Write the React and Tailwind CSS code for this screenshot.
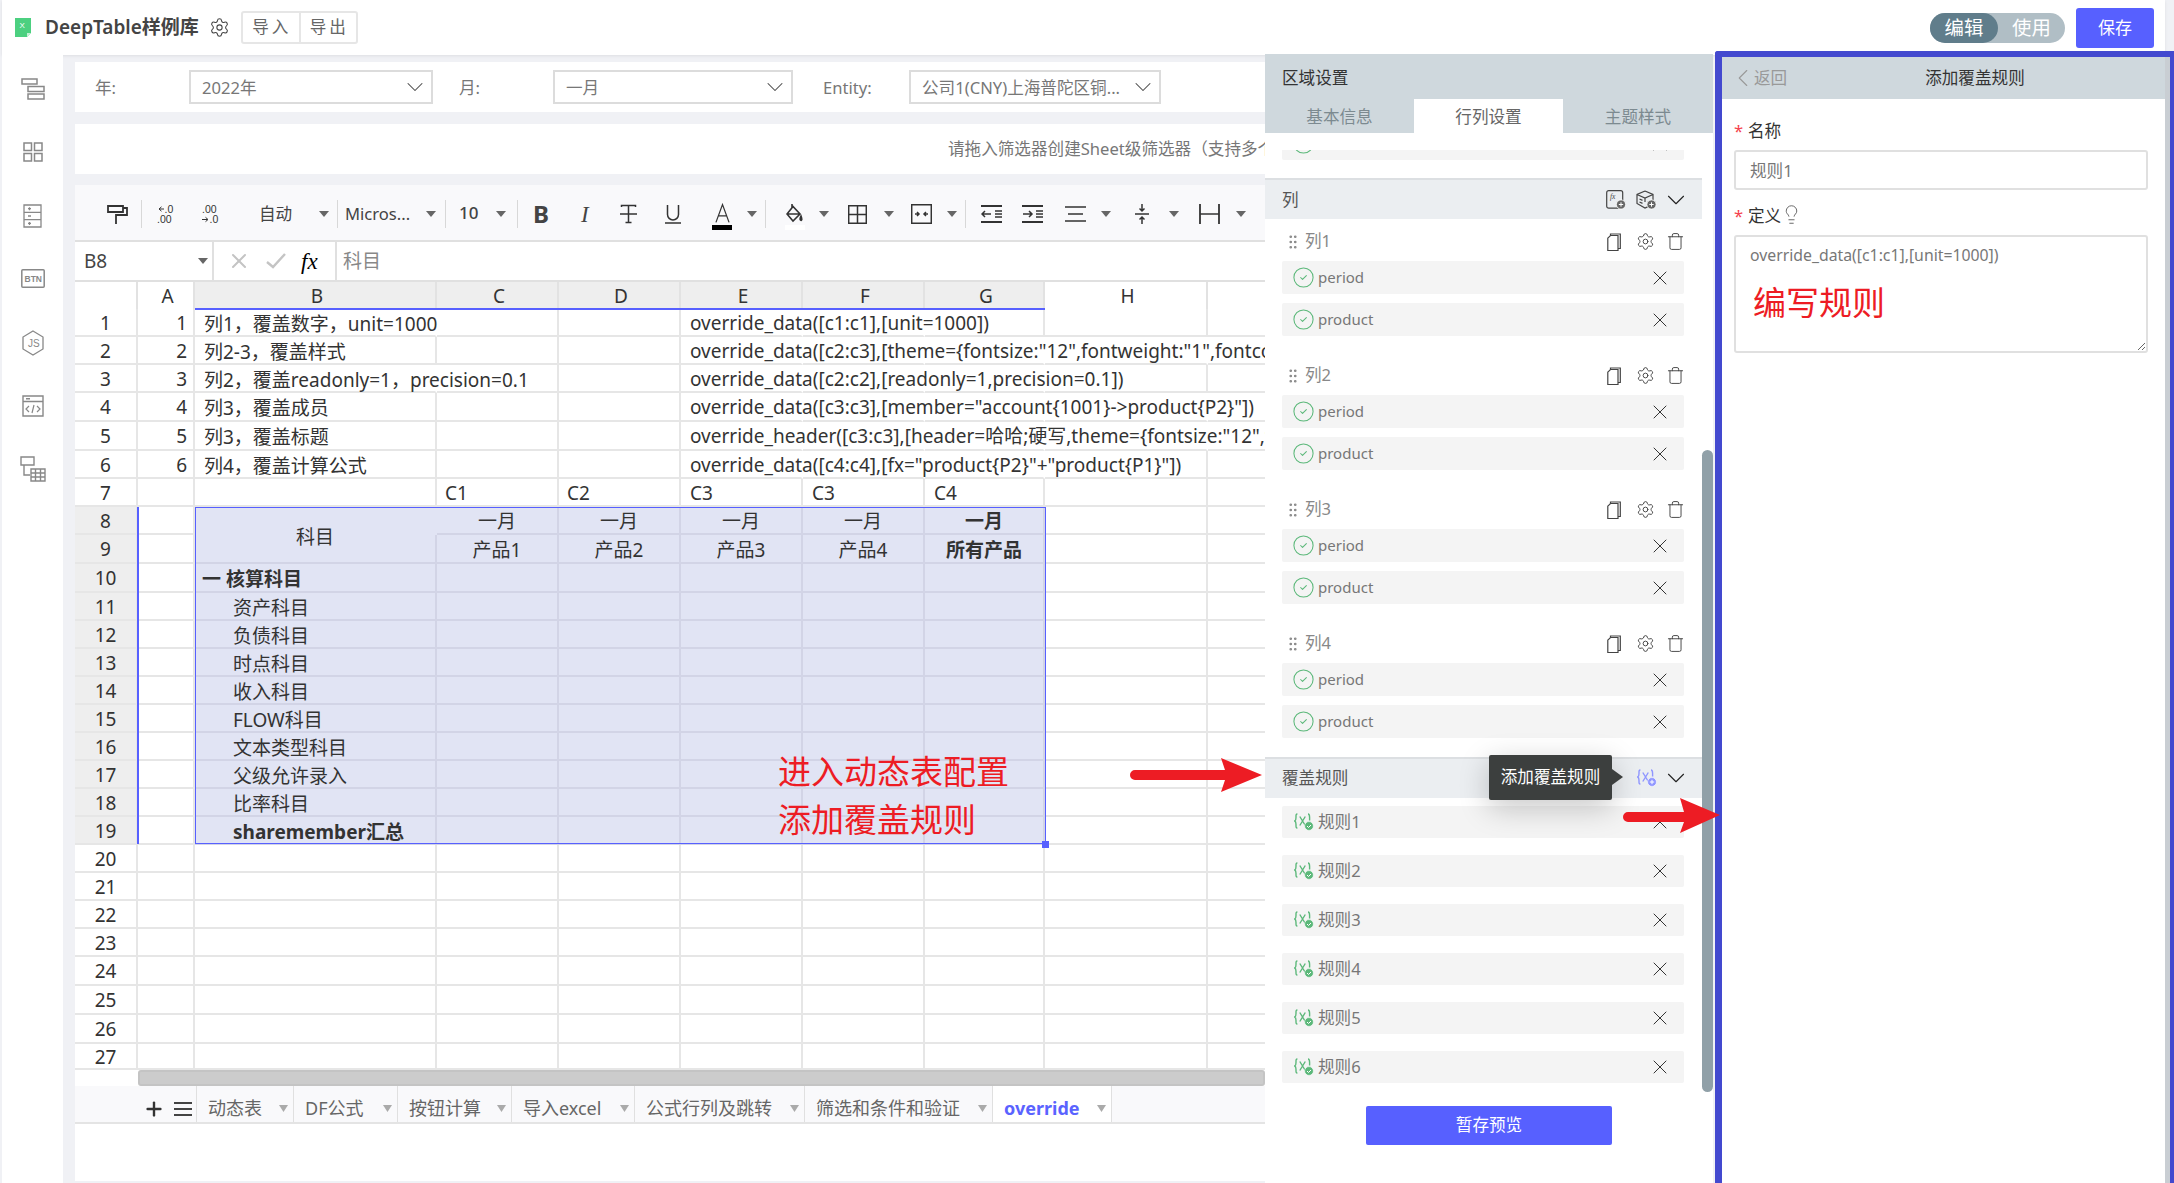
import React from 'react';
import { Settings, ChevronDown, ChevronLeft, CircleCheck, X, GripVertical, Trash, Lightbulb, Plus } from 'lucide-react';

const Caret = ({ className = '' }) => (
    <svg viewBox="0 0 10 6" className={`h-[6px] w-[10px] shrink-0 ${className}`}>
        <path d="M0 0h10L5 6z" fill="#666" />
    </svg>
);

const Sep = ({ className = '' }) => <div className={`h-[28px] w-px shrink-0 bg-[#d8d8d8] ${className}`} />;

// small drawings for the toolbar
const Ico = ({ className = '', vb = '0 0 20 20', children }) => (
    <svg viewBox={vb} fill="none" stroke="#333" strokeWidth="1.5" className={`shrink-0 ${className}`}>
        {children}
    </svg>
);

const FxDoc = () => (
    <svg viewBox="0 0 20 20" fill="none" className="h-[20px] w-[20px] shrink-0">
        <rect x="0.7" y="0.7" width="16" height="17.5" rx="2" stroke="#444" strokeWidth="1.2" />
        <text x="4" y="9" fontSize="7.5" fontStyle="italic" fill="#444" fontFamily="Liberation Serif">fx</text>
        <circle cx="15" cy="14.5" r="4.6" fill="#666" stroke="#fff" strokeWidth="0.8" />
        <path d="M15 12.3v4.4M12.8 14.5h4.4" stroke="#fff" strokeWidth="1" />
    </svg>
);

const CubePlus = () => (
    <svg viewBox="0 0 21 20" fill="none" stroke="#444" strokeWidth="1.2" className="h-[20px] w-[21px] shrink-0">
        <path d="M9 1l8 3.5v6M9 1L1 4.5v9L9 18l3-1.4M1 4.5L9 8l8-3.5M9 8v4M3.5 9l3 1.4M3.5 12l3 1.4" />
        <circle cx="15.5" cy="14.5" r="4.6" fill="#666" stroke="#fff" strokeWidth="0.8" />
        <path d="M15.5 12.3v4.4M13.3 14.5h4.4" stroke="#fff" strokeWidth="1" />
    </svg>
);

const CopyDoc = () => (
    <svg viewBox="0 0 14 18" fill="none" stroke="#444" strokeWidth="1.2" className="h-[18px] w-[14px] shrink-0">
        <path d="M3.5 2.5V1h9.8v14.5h-2.3" />
        <path d="M.8 5.2L3.5 2.5h7.5v15H.8z" />
    </svg>
);

const RuleIcon = ({ color = '#5cb87a', add = false }) => (
    <svg viewBox="0 0 20 18" fill="none" stroke={color} strokeWidth="1.4" className="h-[18px] w-[20px] shrink-0">
        <path d="M3.4 1C1.8 1 2 2.5 2 4.5S1.9 7.5.8 8c1.1.5 1.2 1.5 1.2 3.5S1.8 15 3.4 15" />
        <path d="M5.8 3.5l5.5 9M11.3 3.5L5.8 12.5" />
        <path d="M14 1c1.6 0 1.6 1.5 1.6 3.5v3" />
        <circle cx="15" cy="13" r="4.4" fill={color} stroke="#fff" strokeWidth="0.6" />
        {add ? (
            <path d="M15 10.8v4.4M12.8 13h4.4" stroke="#fff" strokeWidth="1" />
        ) : (
            <path d="M13 13l1.5 1.5L17 12" stroke="#fff" strokeWidth="1" />
        )}
    </svg>
);

const widths = [
    'w-[63px]', 'w-[57px]', 'w-[242px]', 'w-[122px]', 'w-[122px]',
    'w-[122px]', 'w-[122px]', 'w-[120px]', 'w-[163px]', 'w-[60px]',
];

const colNames = ['', 'A', 'B', 'C', 'D', 'E', 'F', 'G', 'H', ''];

const textRows = [
    { h: 'h-[28px]', a: '1', b: '列1，覆盖数字，unit=1000', e: 'override_data([c1:c1],[unit=1000])', open: [2, 5, 6] },
    { h: 'h-[28px]', a: '2', b: '列2-3，覆盖样式', e: 'override_data([c2:c3],[theme={fontsize:"12",fontweight:"1",fontcolor:"#000"}])', open: [5, 6, 7, 8] },
    { h: 'h-[28px]', a: '3', b: '列2，覆盖readonly=1，precision=0.1', e: 'override_data([c2:c2],[readonly=1,precision=0.1])', open: [2, 5, 6, 7] },
    { h: 'h-[29px]', a: '4', b: '列3，覆盖成员', e: 'override_data([c3:c3],[member="account{1001}->product{P2}"])', open: [5, 6, 7, 8] },
    { h: 'h-[29px]', a: '5', b: '列3，覆盖标题', e: 'override_header([c3:c3],[header=哈哈;硬写,theme={fontsize:"12",fontweight:"1"}])', open: [5, 6, 7, 8] },
    { h: 'h-[28px]', a: '6', b: '列4，覆盖计算公式', e: 'override_data([c4:c4],[fx="product{P2}"+"product{P1}"])', open: [5, 6, 7] },
];

const subjects = [
    { n: 10, h: 'h-[29px]', t: '一 核算科目', strong: true },
    { n: 11, h: 'h-[28px]', t: '资产科目', indent: true },
    { n: 12, h: 'h-[28px]', t: '负债科目', indent: true },
    { n: 13, h: 'h-[28px]', t: '时点科目', indent: true },
    { n: 14, h: 'h-[28px]', t: '收入科目', indent: true },
    { n: 15, h: 'h-[28px]', t: 'FLOW科目', indent: true },
    { n: 16, h: 'h-[28px]', t: '文本类型科目', indent: true },
    { n: 17, h: 'h-[28px]', t: '父级允许录入', indent: true },
    { n: 18, h: 'h-[28px]', t: '比率科目', indent: true },
    { n: 19, h: 'h-[28px]', t: 'sharemember汇总', indent: true, strong: true },
];

const blanks = [
    { n: 20, h: 'h-[28px]' }, { n: 21, h: 'h-[28px]' }, { n: 22, h: 'h-[28px]' }, { n: 23, h: 'h-[28px]' },
    { n: 24, h: 'h-[29px]' }, { n: 25, h: 'h-[29px]' }, { n: 26, h: 'h-[29px]' }, { n: 27, h: 'h-[26px]' },
];

const Cell = ({ i, sel, open, pt = 'pt-[2px]', className = '', children }) => (
    <div
        className={`${widths[i]} ${pt} flex h-full shrink-0 items-center whitespace-nowrap border-b-2 ${open ? 'border-r-2 border-r-transparent' : 'border-r-2'} ${sel ? 'border-[#d2d4e6] bg-[#e1e4f4]' : 'border-[#e6e6e6]'} ${className}`}
    >
        {children}
    </div>
);

const RowHead = ({ n, active }) => (
    <Cell i={0} className={`justify-center ${active ? 'bg-[#eeeeee]' : ''}`}>{n}</Cell>
);

const TextRow = ({ row, n }) => (
    <div className={`flex ${row.h}`}>
        <RowHead n={n} />
        <Cell i={1} className="justify-end pr-[6px]">{row.a}</Cell>
        <Cell i={2} open={row.open.includes(2)} pt="pt-[4px]" className="pl-[9px]">{row.b}</Cell>
        <Cell i={3} />
        <Cell i={4} />
        <Cell i={5} open className="pl-[9px]">{row.e}</Cell>
        <Cell i={6} open={row.open.includes(6)} />
        <Cell i={7} open={row.open.includes(7)} />
        <Cell i={8} open={row.open.includes(8)} />
        <Cell i={9} />
    </div>
);

const HeadCols = ({ items, n, h }) => (
    <div className={`flex ${h}`}>
        <RowHead n={n} active />
        <Cell i={1} />
        {n === 8 ? (
            <Cell i={2} sel open className="justify-center border-b-transparent">
                <span className="relative z-10 mt-[33px]">科目</span>
            </Cell>
        ) : (
            <Cell i={2} sel />
        )}
        {items.map((t, k) => (
            <Cell key={k} i={3 + k} sel pt="pt-[3px]" className={`justify-center ${k === 4 ? 'font-bold' : ''}`}>{t}</Cell>
        ))}
        <Cell i={8} />
        <Cell i={9} />
    </div>
);

const SheetGrid = () => (
    <div className="relative text-[19px] text-[#333]">
        <div className="flex h-[27px]">
            {colNames.map((c, i) => (
                <div
                    key={i}
                    className={`${widths[i]} flex shrink-0 items-center justify-center border-r-2 border-[#e2e2e2] pl-[4px] pt-[1px] ${i >= 2 && i <= 7 ? 'bg-[#eeeeee]' : ''}`}
                >
                    {c}
                </div>
            ))}
        </div>
        {textRows.map((row, i) => <TextRow key={i} row={row} n={i + 1} />)}
        <div className="flex h-[28px]">
            <RowHead n={7} />
            <Cell i={1} />
            <Cell i={2} />
            <Cell i={3} className="pl-[8px]">C1</Cell>
            <Cell i={4} className="pl-[8px]">C2</Cell>
            <Cell i={5} className="pl-[9px]">C3</Cell>
            <Cell i={6} className="pl-[9px]">C3</Cell>
            <Cell i={7} className="pl-[9px]">C4</Cell>
            <Cell i={8} />
            <Cell i={9} />
        </div>
        <HeadCols n={8} h="h-[28px]" items={['一月', '一月', '一月', '一月', '一月']} />
        <HeadCols n={9} h="h-[29px]" items={['产品1', '产品2', '产品3', '产品4', '所有产品']} />
        {subjects.map((s) => (
            <div key={s.n} className={`flex ${s.h}`}>
                <RowHead n={s.n} active />
                <Cell i={1} />
                <Cell i={2} sel pt="pt-[4px]" className={`${s.indent ? 'pl-[38px]' : 'pl-[7px]'} ${s.strong ? 'font-bold' : ''}`}>{s.t}</Cell>
                <Cell i={3} sel />
                <Cell i={4} sel />
                <Cell i={5} sel />
                <Cell i={6} sel />
                <Cell i={7} sel />
                <Cell i={8} />
                <Cell i={9} />
            </div>
        ))}
        {blanks.map((s) => (
            <div key={s.n} className={`flex ${s.h}`}>
                <RowHead n={s.n} />
                {[1, 2, 3, 4, 5, 6, 7, 8, 9].map((i) => <Cell key={i} i={i} />)}
            </div>
        ))}
        {/* selection frame */}
        <div className="absolute left-[120px] top-[225px] h-[337px] w-[851px] border-[1.5px] border-[#5760ff]" />
        <div className="absolute left-[62px] top-[225px] h-[337px] w-[1.5px] bg-[#5760ff]" />
        <div className="absolute left-[120px] top-[26px] h-[1.5px] w-[850px] bg-[#5760ff]" />
        <div className="absolute left-[967px] top-[559px] h-[7px] w-[7px] bg-[#5760ff]" />
    </div>
);

const Select = ({ value, className = '' }) => (
    <div className={`flex h-[34px] shrink-0 items-center justify-between border-2 border-[#dcdcdc] pl-[11px] pr-[2px] text-[#777] ${className}`}>
        <span className="whitespace-nowrap pt-[2px]">{value}</span>
        <ChevronDown size={28} strokeWidth={0.9} color="#444" />
    </div>
);

const Toolbar = () => (
    <div className="flex h-[57px] items-center border-b-2 border-[#e0e0e0] bg-[#f9f9fb] pt-[3px] text-[#444]">
        <Ico vb="0 0 21 20" className="ml-[32px] h-[20px] w-[21px]">
            <path d="M1 2h15v6H1zM16 4h4v7H9v9" strokeWidth="1.8" />
        </Ico>
        <Sep className="ml-[13px]" />
        <svg viewBox="0 0 17 20" className="ml-[15px] h-[20px] w-[17px] shrink-0" fill="#333">
            <text x="7.5" y="8.5" fontSize="10.5" fontFamily="Liberation Sans">.0</text>
            <text x="0" y="19" fontSize="10.5" fontFamily="Liberation Sans">.00</text>
            <path d="M7 5H2.5M4.5 2.8L2 5l2.5 2.2" fill="none" stroke="#333" />
        </svg>
        <svg viewBox="0 0 18 20" className="ml-[27px] h-[20px] w-[18px] shrink-0" fill="#333">
            <text x="1" y="8.5" fontSize="10.5" fontFamily="Liberation Sans">.00</text>
            <text x="8.5" y="19" fontSize="10.5" fontFamily="Liberation Sans">.0</text>
            <path d="M1 15.5h5.5M4.5 13.3L7 15.5l-2.5 2.2" fill="none" stroke="#333" />
        </svg>
        <span className="ml-[40px] w-[33px] shrink-0 whitespace-nowrap">自动</span>
        <Caret className="ml-[27px]" />
        <Sep className="ml-[8px]" />
        <span className="ml-[7px] w-[67px] shrink-0 whitespace-nowrap">Micros...</span>
        <Caret className="ml-[14px]" />
        <Sep className="ml-[9px]" />
        <span className="ml-[13px] -mt-[4px] w-[19px] shrink-0 text-[17px] font-medium leading-none">10</span>
        <Caret className="ml-[18px]" />
        <Sep className="ml-[11px]" />
        <span className="ml-[15px] w-[16px] shrink-0 text-[24px] font-bold leading-none">B</span>
        <span className="ml-[32px] w-[8px] shrink-0 font-['Liberation_Serif',serif] text-[23px] italic leading-none">I</span>
        <Ico vb="0 0 17 20" className="ml-[31px] h-[20px] w-[17px]">
            <path d="M1.5 3V1.5h14V3M8.5 1.5v17M5.5 18.5h6M0 10h17" />
        </Ico>
        <Ico vb="0 0 18 20" className="ml-[27px] h-[20px] w-[18px]">
            <path d="M3.5 1v9.5a5.5 5.5 0 0 0 11 0V1M1 19h16" />
        </Ico>
        <div className="ml-[30px] mt-[5px] flex w-[20px] shrink-0 flex-col items-center">
            <svg viewBox="0 0 16 20" fill="none" stroke="#333" strokeWidth="1.3" className="h-[20px] w-[15px]">
                <path d="M1 20L8 1l7 19M3.5 13h9" />
            </svg>
            <div className="mt-[2px] h-[5px] w-[20px] bg-black" />
        </div>
        <Caret className="ml-[15px]" />
        <Sep className="ml-[8px]" />
        <div className="ml-[20px] mt-[5px] flex w-[17px] shrink-0 flex-col items-center">
            <Ico vb="0 0 17 20" className="h-[20px] w-[17px]">
                <path d="M6 1v5M7 3.5L1 11l6 7 7-7zM1.5 11h12M15 13c-1 2-1.5 3-.5 4s2 0 .5-4z" strokeWidth="1.6" />
            </Ico>
            <div className="mt-[2px] h-[5px] w-[20px] shrink-0 bg-white" />
        </div>
        <Caret className="ml-[16px]" />
        <Ico vb="0 0 19 19" className="ml-[19px] h-[19px] w-[19px]">
            <path d="M.7.7h17.6v17.6H.7zM9.5.7v17.6M.7 9.5h17.6" />
        </Ico>
        <Caret className="ml-[17px]" />
        <Ico vb="0 0 21 20" className="ml-[17px] h-[20px] w-[21px]">
            <path d="M.7.7h19.6v18.6H.7zM4 10h4M6 8l2 2-2 2M17 10h-4M15 8l-2 2 2 2" />
        </Ico>
        <Caret className="ml-[15px]" />
        <Sep className="ml-[8px]" />
        <Ico vb="0 0 21 20" className="ml-[15px] h-[20px] w-[21px]">
            <path d="M0 2h21M0 18h21" strokeWidth="2" />
            <path d="M10 10H1M4 7l-3 3 3 3M14 7h7M14 10h7M14 13h7" />
        </Ico>
        <Ico vb="0 0 21 20" className="ml-[20px] h-[20px] w-[21px]">
            <path d="M0 2h21M0 18h21" strokeWidth="2" />
            <path d="M1 10h9M7 7l3 3-3 3M14 7h7M14 10h7M14 13h7" />
        </Ico>
        <Ico vb="0 0 21 18" className="ml-[22px] h-[18px] w-[21px]">
            <path d="M0 2h21M3 9h15M0 16h21" strokeWidth="1.5" />
        </Ico>
        <Caret className="ml-[15px]" />
        <Ico vb="0 0 14 20" className="ml-[24px] h-[20px] w-[14px]">
            <path d="M0 10h14M7 0v7M4.5 4.5L7 7l2.5-2.5M7 20v-7M4.5 15.5L7 13l2.5 2.5" />
        </Ico>
        <Caret className="ml-[20px]" />
        <Ico vb="0 0 21 20" className="ml-[20px] h-[20px] w-[21px]">
            <path d="M1 0v20M20 0v20" strokeWidth="1.8" />
            <path d="M1 10h19" />
        </Ico>
        <Caret className="ml-[16px]" />
    </div>
);

const FormulaBar = () => (
    <div className="flex h-[40px] items-center border-b-2 border-[#e0e0e0] text-[19px]">
        <div className="flex h-full w-[139px] shrink-0 items-center justify-between border-r-2 border-[#e0e0e0] pl-[9px] pr-[4px] text-[#444]">
            B8
            <Caret />
        </div>
        <X size={24} strokeWidth={2} color="#c4c4c4" className="ml-[13px] shrink-0" />
        <svg viewBox="0 0 20 16" fill="none" stroke="#c4c4c4" strokeWidth="2.4" className="ml-[15px] h-[16px] w-[20px] shrink-0">
            <path d="M1 9l6 5L19 1" />
        </svg>
        <span className="ml-[15px] w-[18px] shrink-0 font-['Liberation_Serif',serif] text-[23px] italic leading-none">fx</span>
        <div className="ml-[16px] h-full w-[2px] shrink-0 bg-[#e0e0e0]" />
        <span className="ml-[6px] text-[#888]">科目</span>
    </div>
);

const sheetTabs = [
    { t: '动态表', w: 'w-[97px]' },
    { t: 'DF公式', w: 'w-[104px]' },
    { t: '按钮计算', w: 'w-[114px]' },
    { t: '导入excel', w: 'w-[123px]' },
    { t: '公式行列及跳转', w: 'w-[170px]' },
    { t: '筛选和条件和验证', w: 'w-[188px]' },
    { t: 'override', w: 'w-[119px]', active: true },
];

const SheetTabs = () => (
    <div className="flex h-[38px] items-stretch border-b-2 border-[#e4e4e4] bg-[#f9f9fb] pl-[68px]">
        <Plus size={22} strokeWidth={2.6} color="#333" className="mt-[12px] shrink-0" />
        <svg viewBox="0 0 18 14" className="ml-[9px] mt-[16px] h-[14px] w-[18px] shrink-0" fill="#444">
            <path d="M0 0h18v2H0zM0 6h18v2H0zM0 12h18v2H0z" />
        </svg>
        <div className="ml-[4px] flex border-l border-[#e0e0e0]">
            {sheetTabs.map((tab) => (
                <div
                    key={tab.t}
                    className={`${tab.w} flex shrink-0 items-center justify-between border-r border-[#e0e0e0] pl-[11px] pr-[5px] pt-[9px] text-[18px] ${tab.active ? 'bg-white font-bold text-[#5a63ff]' : 'text-[#666]'}`}
                >
                    <span className="whitespace-nowrap">{tab.t}</span>
                    <svg viewBox="0 0 9 7" className="h-[7px] w-[9px] shrink-0"><path d="M0 0h9L4.5 7z" fill="#aaa" /></svg>
                </div>
            ))}
        </div>
    </div>
);

const FieldItem = ({ label }) => (
    <div className="mx-[17px] flex h-[33px] w-[402px] items-center rounded-[2px] bg-[#f4f4f4] pl-[10px] pr-[12px] text-[15px] text-[#777]">
        <CircleCheck size={23} strokeWidth={1.1} color="#5cb87a" className="shrink-0" />
        <span className="ml-[3px]">{label}</span>
        <X size={24} strokeWidth={1} color="#333" className="ml-auto shrink-0" />
    </div>
);

const RuleItem = ({ label }) => (
    <div className="mx-[17px] flex h-[32px] w-[402px] items-center rounded-[2px] bg-[#f4f4f4] pl-[12px] pr-[12px] text-[#777]">
        <RuleIcon />
        <span className="ml-[4px]">{label}</span>
        <X size={24} strokeWidth={1} color="#333" className="ml-auto shrink-0" />
    </div>
);

const ColumnGroup = ({ label }) => (
    <div className="h-[134px]">
        <div className="flex h-[42px] items-center pl-[19px] pr-[17px] pt-[3px] text-[#888]">
            <GripVertical size={18} strokeWidth={1.6} color="#888" className="shrink-0" />
            <span className="ml-[3px]">{label}</span>
            <div className="ml-auto flex items-center">
                <CopyDoc />
                <Settings size={19} strokeWidth={1.2} color="#444" className="ml-[15px]" />
                <Trash size={19} strokeWidth={1.2} color="#444" className="ml-[11px]" />
            </div>
        </div>
        <FieldItem label="period" />
        <div className="mt-[9px]"><FieldItem label="product" /></div>
    </div>
);

const AreaPanel = () => (
    <div className="relative z-10 -mt-[1px] flex h-[1129px] w-[448px] shrink-0 flex-col bg-white text-[16.6px]">
        <div className="bg-[#cfd8dd]">
            <div className="flex h-[45px] items-center pl-[17px] pt-[3px] text-[#333]">区域设置</div>
            <div className="flex h-[34px]">
                <div className="flex w-[149px] items-center justify-center pt-[2px] text-[#7c8a90]">基本信息</div>
                <div className="flex w-[149px] items-center justify-center bg-white pt-[2px] text-[#666]">行列设置</div>
                <div className="flex w-[150px] items-center justify-center pt-[2px] text-[#7c8a90]">主题样式</div>
            </div>
        </div>
        <div className="relative flex-1">
            <div className="mt-[17px] h-[10px] overflow-hidden">
                <div className="-mt-[23px]"><FieldItem label="account" /></div>
            </div>
            <div className="mt-[18px] w-[437px]">
                <div className="flex h-[41px] items-center border-t-2 border-[#dcdfe2] bg-[#ebeef1] pl-[17px] pr-[11px] pt-[1px] text-[#555]">
                    列
                    <div className="ml-auto flex items-center">
                        <FxDoc />
                        <div className="ml-[10px]"><CubePlus /></div>
                        <ChevronDown size={30} strokeWidth={0.9} color="#222" className="ml-[4px]" />
                    </div>
                </div>
                <ColumnGroup label="列1" />
                <ColumnGroup label="列2" />
                <ColumnGroup label="列3" />
                <ColumnGroup label="列4" />
                <div className="relative mt-[2px] flex h-[41px] items-center border-t-2 border-[#dcdfe2] bg-[#ebeef1] pb-[1px] pl-[17px] pr-[11px] text-[#555]">
                    覆盖规则
                    <div className="ml-auto flex items-center">
                        <RuleIcon color="#8f96ff" add />
                        <ChevronDown size={30} strokeWidth={0.9} color="#222" className="ml-[4px]" />
                    </div>
                    {/* tooltip */}
                    <div className="absolute left-[224px] top-[-4px] z-10 flex h-[45px] w-[123px] items-center justify-center rounded-[2px] bg-[#3c3f3e] text-white shadow-[0_8px_30px_rgba(0,0,0,0.22)]">
                        添加覆盖规则
                        <span className="absolute left-full top-[14px] h-0 w-0 border-y-[8px] border-l-[11px] border-y-transparent border-l-[#3c3f3e]" />
                    </div>
                </div>
                <div className="mt-[8px] flex flex-col gap-[17px]">
                    {['规则1', '规则2', '规则3', '规则4', '规则5', '规则6'].map((r) => <RuleItem key={r} label={r} />)}
                </div>
                <button className="ml-[101px] mt-[23px] h-[39px] w-[246px] rounded-[2px] bg-[#5760ff] text-white">暂存预览</button>
            </div>
            {/* scrollbar sits over the list */}
            <div className="absolute right-0 top-[317px] h-[642px] w-[11px] rounded-full bg-[#90a0a8]" />
        </div>
    </div>
);

const RulePanel = () => (
    <div className="relative z-20 -mt-[4px] ml-[2px] flex h-[1132px] w-[459px] shrink-0 rounded-tl-[3px] border-l-[7px] border-r-[4px] border-t-[6px] border-[#4349cf] bg-[#c9ced3] text-[16.6px]">
        <div className="flex h-full w-[443px] flex-col bg-white">
            <div className="flex h-[42px] items-center bg-[#cfd8dd] pl-[6px]">
                <ChevronLeft size={30} strokeWidth={0.9} color="#999" className="shrink-0" />
                <span className="-ml-[4px] text-[#999]">返回</span>
                <span className="ml-[138px] text-[#333]">添加覆盖规则</span>
            </div>
            <div className="px-[12px] pr-[17px]">
                <div className="mt-[19px] flex h-[26px] items-center text-[#333]">
                    <span className="w-[14px] text-[#f5424d]">*</span>名称
                </div>
                <input
                    readOnly
                    value="规则1"
                    className="mt-[6px] h-[40px] w-[414px] rounded-[3px] border-2 border-[#e0e0e0] px-[14px] text-[#777] outline-none"
                />
                <div className="mt-[13px] flex h-[26px] items-center text-[#333]">
                    <span className="w-[14px] text-[#f5424d]">*</span>定义
                    <Lightbulb size={21} strokeWidth={1} color="#555" className="-mt-[3px]" />
                </div>
                <textarea
                    readOnly
                    value="override_data([c1:c1],[unit=1000])"
                    className="mt-[6px] block h-[118px] w-[414px] resize rounded-[3px] border-2 border-[#e0e0e0] px-[14px] pt-[8px] text-[15.8px] leading-[20px] text-[#777] outline-none"
                />
            </div>
        </div>
    </div>
);

export default function App() {
    return (
        <div className="relative flex h-[1183px] w-[2174px] flex-col overflow-hidden bg-[#f0f1f5] font-['Noto_Sans','Noto_Sans_CJK_SC',sans-serif] text-[16.6px]">
            <header className="ml-[2px] flex h-[55px] w-[2163px] shrink-0 items-center bg-white pl-[13px] pr-[11px] shadow-[0_1px_3px_rgba(0,0,0,0.08)]">
                <svg viewBox="0 0 16 19" className="h-[19px] w-[16px] shrink-0">
                    <path d="M0 0h16v15l-4 4H0z" fill="#4cd080" />
                    <path d="M12 19v-4h4z" fill="#c5f0d6" />
                    <text x="4.5" y="10" fontSize="8" fill="#fff" fontFamily="Liberation Sans">X</text>
                </svg>
                <span className="ml-[14px] whitespace-nowrap text-[19px] font-semibold text-[#444]">DeepTable样例库</span>
                <Settings size={21} strokeWidth={1.2} color="#444" className="ml-[10px] shrink-0" />
                <div className="ml-[11px] flex h-[33px] w-[117px] rounded-[3px] border-2 border-[#e6e6e6] text-[#666]">
                    <div className="flex w-[58px] items-center justify-center border-r-2 border-[#e6e6e6] pl-[2px] tracking-[3px]">导入</div>
                    <div className="flex flex-1 items-center justify-center pl-[2px] tracking-[3px]">导出</div>
                </div>
                <div className="ml-auto flex h-[30px] w-[135px] rounded-full bg-[#b0bec5] text-[19.4px] text-white">
                    <div className="flex w-[68px] items-center justify-center rounded-full bg-[#607d8b]">编辑</div>
                    <div className="flex flex-1 items-center justify-center">使用</div>
                </div>
                <button className="ml-[11px] h-[40px] w-[78px] rounded-[3px] bg-[#5760ff] text-[17px] text-white">保存</button>
            </header>

            <div className="flex flex-1 pl-[2px]">
                <aside className="flex w-[61px] shrink-0 flex-col items-center bg-white">
                    <svg viewBox="0 0 24 22" fill="none" stroke="#888" strokeWidth="1.5" className="mt-[23px] h-[22px] w-[24px]">
                        <path d="M1 1h15v5H1zM7 8.5h16v5H7zM7 16h16v5H7z" />
                    </svg>
                    <svg viewBox="0 0 20 20" fill="none" stroke="#888" strokeWidth="1.5" className="mt-[42px] h-[20px] w-[20px]">
                        <path d="M1 1h7.5v7.5H1zM11.5 1H19v7.5h-7.5zM1 11.5h7.5V19H1zM11.5 11.5H19V19h-7.5z" />
                    </svg>
                    <svg viewBox="0 0 19 24" fill="none" stroke="#888" strokeWidth="1.5" className="mt-[42px] h-[24px] w-[19px]">
                        <path d="M1 1h17v22H1zM1 8.3h17M1 15.6h17M5 4.6h3M6.5 3.2v3M5 12h3M5 19.3h3M6.5 18v3" strokeWidth="1.3" />
                    </svg>
                    <svg viewBox="0 0 24 19" fill="none" stroke="#888" strokeWidth="1.5" className="mt-[41px] h-[19px] w-[24px]">
                        <rect x="0.8" y="0.8" width="22.4" height="17.4" rx="1" />
                        <text x="3.5" y="13" fontSize="8.5" fill="#888" stroke="none" fontFamily="Liberation Sans" fontWeight="bold">BTN</text>
                    </svg>
                    <svg viewBox="0 0 22 26" fill="none" stroke="#888" strokeWidth="1.3" className="mt-[42px] h-[26px] w-[22px]">
                        <path d="M11 1l10 6v12l-10 6L1 19V7z" />
                        <text x="6" y="17" fontSize="10" fill="#888" stroke="none" fontFamily="Liberation Sans">JS</text>
                    </svg>
                    <svg viewBox="0 0 22 22" fill="none" stroke="#888" strokeWidth="1.4" className="mt-[39px] h-[22px] w-[22px]">
                        <path d="M1 1h20v20H1zM1 6.5h20M4 3.8h4" />
                        <path d="M7 11l-3 3 3 3M15 11l3 3-3 3M12 10l-2 8" strokeWidth="1.2" />
                    </svg>
                    <svg viewBox="0 0 26 26" fill="none" stroke="#888" strokeWidth="1.4" className="mt-[39px] h-[26px] w-[26px]">
                        <path d="M1 1h13v8H1zM4 9v10h6" />
                        <path d="M11 13h14v12H11zM11 17h14M11 21h14M15.5 13v12M20.5 13v12" />
                    </svg>
                </aside>

                <main className="ml-[12px] w-[1190px] shrink-0 overflow-hidden pt-[7px]">
                    <div className="flex h-[50px] items-center bg-white pl-[20px] text-[#777]">
                        <span className="w-[94px] shrink-0 pt-[2px]">年:</span>
                        <Select value="2022年" className="w-[244px]" />
                        <span className="ml-[26px] w-[94px] shrink-0 pt-[2px]">月:</span>
                        <Select value="一月" className="w-[240px]" />
                        <span className="ml-[30px] w-[86px] shrink-0 pt-[2px]">Entity:</span>
                        <Select value="公司1(CNY)上海普陀区铜..." className="w-[252px]" />
                    </div>
                    <div className="mt-[12px] flex h-[50px] items-center overflow-hidden whitespace-nowrap bg-white pl-[873px] text-[#777]">
                        请拖入筛选器创建Sheet级筛选器（支持多个）
                    </div>
                    <div className="mt-[11px] h-[996px] overflow-hidden bg-white">
                        <Toolbar />
                        <FormulaBar />
                        <SheetGrid />
                        <div className="pl-[63px]">
                            <div className="h-[16px] rounded-[3px] border-2 border-[#c4c4c4] bg-[#cccccc]" />
                        </div>
                        <SheetTabs />
                    </div>
                </main>

                <AreaPanel />
                <RulePanel />
            </div>

            {/* red notes drawn over the screenshot */}
            <div className="absolute left-[778px] top-[748px] z-30 text-[33px] leading-[48px] text-[#ed1c24]">
                <div>进入动态表配置</div>
                <div>添加覆盖规则</div>
            </div>
            <svg viewBox="0 0 132 34" className="absolute left-[1130px] top-[758px] z-30 h-[34px] w-[132px]">
                <path d="M5 12h90L91 0l41 17-41 17 4-12H5a5 5 0 0 1 0-10z" fill="#ed1c24" />
            </svg>
            <svg viewBox="0 0 97 35" className="absolute left-[1623px] top-[798px] z-30 h-[35px] w-[97px]">
                <path d="M5 14h56L57 0l40 17-40 18 4-11H5a5 5 0 0 1 0-10z" fill="#ed1c24" />
            </svg>
            <div className="absolute left-[1753px] top-[279px] z-30 text-[33px] leading-[48px] text-[#ed1c24]">编写规则</div>
        </div>
    );
}
